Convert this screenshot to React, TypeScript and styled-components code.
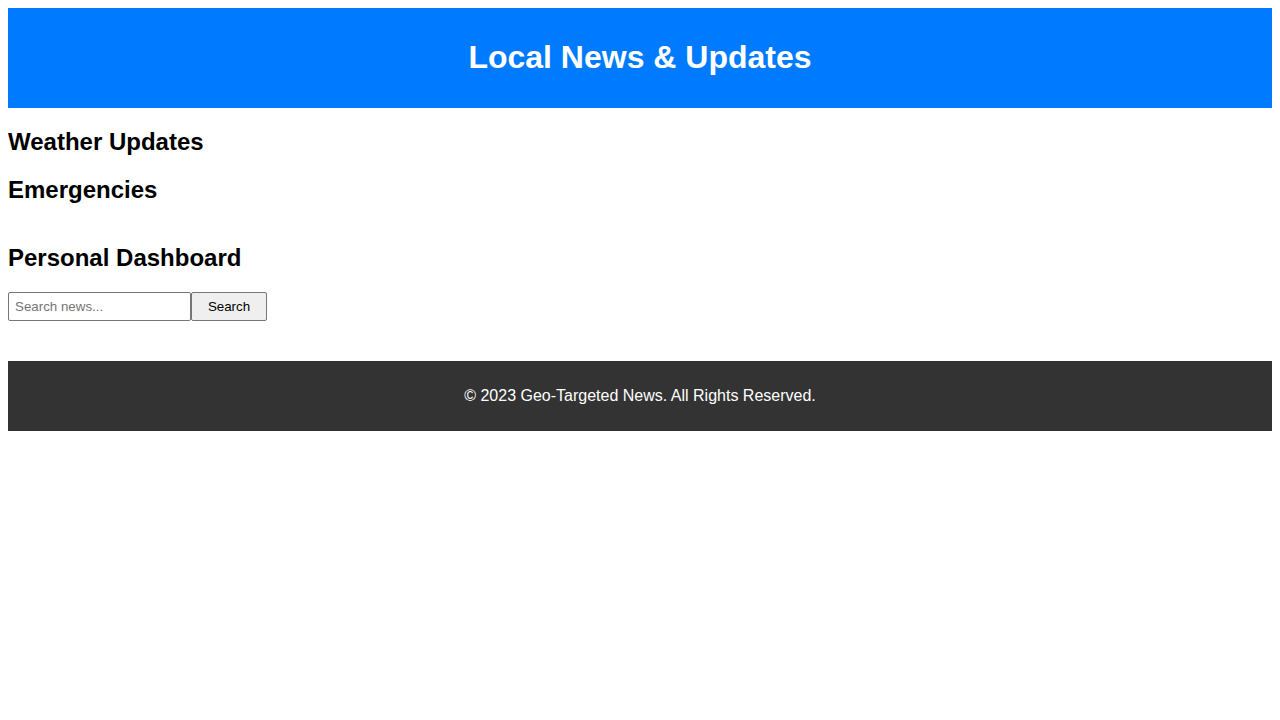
import styled, { createGlobalStyle } from 'styled-components';

const GlobalStyle = createGlobalStyle`
    body {
        margin: 8px;
        font-family: "Liberation Sans", Arial, Helvetica, sans-serif;
        background: #fff;
        color: #000;
    }
`
const Header = styled.header`
    background-color: #007bff;
    color: #fff;
    text-align: center;
    padding: 10px;
`
const Title = styled.h1`
    font-size: 32px;
    margin: 21.44px 0;
`
const NewsFeed = styled.div`
    display: flow-root;
`
const Section = styled.section``
const Heading = styled.h2`
    font-size: 24px;
    margin: 19.92px 0;
`
const SearchForm = styled.form`
    display: flex;
    padding-top: 1px;
`
const SearchInput = styled.input`
    box-sizing: border-box;
    font-family: "Liberation Sans", Arial, sans-serif;
    font-size: 13.333px;
    padding: 6px 6px;
    width: 183px;
    height: 29px;
    border: 1px solid #767676;
    border-radius: 2px;
    margin: 0;
`
const SearchButton = styled.button`
    box-sizing: border-box;
    font-family: "Liberation Sans", Arial, sans-serif;
    font-size: 13.333px;
    padding: 5px 15px;
    width: 76px;
    height: 29px;
    background: #efefef;
    border: 1px solid #767676;
    border-radius: 2px;
    color: #000;
    margin: 0;
`
const Footer = styled.footer`
    background-color: #333;
    color: #fff;
    text-align: center;
    padding: 10px;
    margin-top: 40px;
`
const FooterText = styled.p`
    font-size: 16px;
    margin: 16px 0;
`

const App = (): JSX.Element => {
    return (
        <>
            <GlobalStyle />
            <Header>
                <Title>Local News &amp; Updates</Title>
            </Header>
            <main>
                <NewsFeed>
                    <Section>
                        <Heading>Weather Updates</Heading>
                    </Section>
                    <Section>
                        <Heading>Emergencies</Heading>
                    </Section>
                </NewsFeed>
                <Section>
                    <Heading>Personal Dashboard</Heading>
                    <SearchForm onSubmit={(e) => e.preventDefault()}>
                        <SearchInput type="text" placeholder="Search news..." />
                        <SearchButton type="submit">Search</SearchButton>
                    </SearchForm>
                </Section>
            </main>
            <Footer>
                <FooterText>© 2023 Geo-Targeted News. All Rights Reserved.</FooterText>
            </Footer>
        </>
    )
}
export default App;
